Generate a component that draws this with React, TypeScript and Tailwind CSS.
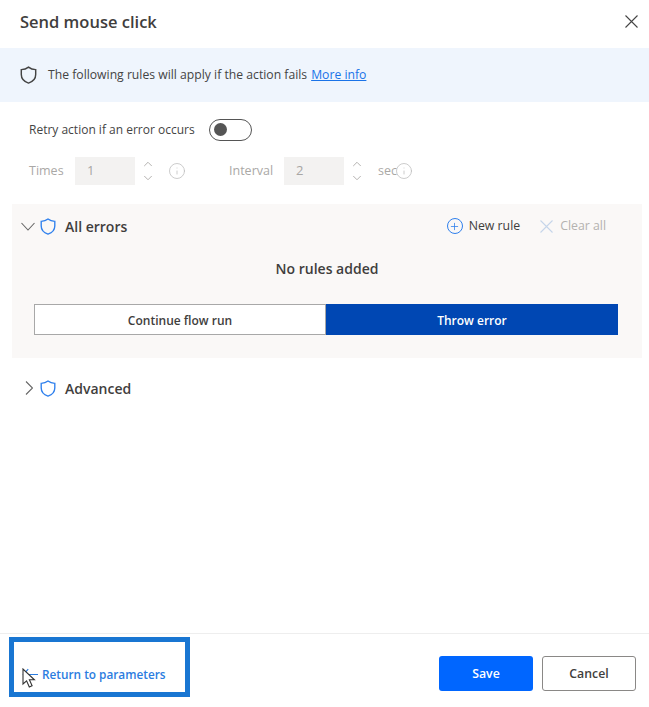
import { ChevronDown, ChevronUp, Info, Plus } from "lucide-react"

const font = { fontFamily: '"Open Sans", "Noto Sans", sans-serif' }

function Shield({ className }: { className: string }) {
  return (
    <svg viewBox="0 0 18 20" fill="none" stroke="currentColor" strokeWidth="1.6" className={className}>
      <path d="M9 1.2C11.2 3 13.800 3.900 17 4v5.400c0 4.600-2.700 7.800-8 9.600-5.300-1.800-8-5-8-9.600V4c3.200-.1 5.800-1 8-2.800z" />
    </svg>
  )
}

function Cross({ className }: { className: string }) {
  return (
    <svg viewBox="0 0 13 13" fill="none" stroke="currentColor" strokeWidth="1.1" className={className}>
      <path d="M.5.5l12 12M12.500.5l-12 12" />
    </svg>
  )
}

function Spinner({ value }: { value: string }) {
  return (
    <div className="flex h-7 w-20 items-center">
      <div className="flex h-7 w-[60px] items-center bg-[#f3f2f1] pl-3 text-[13px] text-[#a8a6a4]">{value}</div>
      <div className="ml-[6px] flex w-[14px] flex-col items-center text-[#b4b2b0]">
        <ChevronUp size={14} strokeWidth={1.7} />
        <ChevronDown size={14} strokeWidth={1.7} />
      </div>
    </div>
  )
}

export default function App() {
  return (
    <div style={font} className="flex h-[707px] w-[649px] flex-col overflow-hidden bg-white text-[#3f3e3d]">
      {/* Title */}
      <div className="flex h-12 shrink-0 items-center justify-between pr-[11px] pl-5 pb-[3px]">
        <h1 className="text-[16.500px] font-semibold">Send mouse click</h1>
        <Cross className="mb-[2px] h-[13px] w-[13px] text-[#444]" />
      </div>

      {/* Banner */}
      <div className="flex h-[54px] shrink-0 items-center bg-[#eff5fd] pl-5 text-[12.200px] text-[#444]">
        <Shield className="h-[18px] w-[17px] text-[#444]" />
        <span className="ml-[11px]">The following rules will apply if the action fails</span>
        <span className="ml-1 text-[#1a73e8] underline">More info</span>
      </div>

      {/* Retry */}
      <div className="mt-4 flex h-[23px] items-center pl-[29px] text-[12px] text-[#444]">
        <span className="w-[180px]">Retry action if an error occurs</span>
        <div className="flex h-[22px] w-[43px] items-center rounded-full border border-[#555] pl-1">
          <div className="h-[13px] w-[13px] rounded-full bg-[#555]" />
        </div>
      </div>

      <div className="mt-[16px] flex h-7 items-center pl-[29px] text-[12.500px] text-[#aaa8a6]">
        <span className="w-[46px]">Times</span>
        <Spinner value="1" />
        <Info size={18} strokeWidth={1} className="ml-[13px] text-[#bbb]" />
        <span className="ml-[43px] w-[55px]">Interval</span>
        <Spinner value="2" />
        <span className="ml-[14px] w-[17px] whitespace-nowrap">sec</span>
        <Info size={18} strokeWidth={1} className="text-[#bbb]" />
      </div>

      {/* All errors */}
      <div className="mt-[19px] ml-3 h-[154px] w-[630px] bg-[#faf8f7] pt-[13px]">
        <div className="flex h-[18px] items-center pr-[36px] pl-[9px]">
          <svg viewBox="0 0 14 9" fill="none" stroke="currentColor" strokeWidth="1.1" className="h-[9px] w-[14px] text-[#666]">
            <path d="M.5 1 7 8l6.500-7" />
          </svg>
          <Shield className="ml-[5px] h-[17px] w-[16px] text-[#2f80ed]" />
          <span className="ml-[9px] text-[14px] font-semibold">All errors</span>
          <div className="ml-auto flex h-[16px] w-[16px] items-center justify-center rounded-full border-[1.500px] border-[#2f80ed] text-[#2f80ed]">
            <Plus size={11} strokeWidth={1.7} />
          </div>
          <span className="ml-[6px] text-[12.300px]">New rule</span>
          <Cross className="ml-[20px] h-[13px] w-[13px] text-[#c5d5ea]" />
          <span className="ml-[7px] text-[12.300px] text-[#b4b2b0]">Clear all</span>
        </div>
        <div className="mt-[24px] text-center text-[14px] leading-[20px] font-semibold">No rules added</div>
        <div className="mt-[25px] ml-[22px] flex h-[31px] w-[584px] text-[12px] font-semibold">
          <div className="flex w-[292px] items-center justify-center border border-[#a8a8a8] bg-white pt-[2px]">Continue flow run</div>
          <div className="flex w-[292px] items-center justify-center bg-[#0047b3] pt-[2px] text-white">Throw error</div>
        </div>
      </div>

      {/* Advanced */}
      <div className="mt-[21px] flex h-[18px] items-center pl-[25px]">
        <svg viewBox="0 0 8 14" fill="none" stroke="currentColor" strokeWidth="1.1" className="h-[14px] w-[8px] text-[#666]">
          <path d="M1 .5 7.500 7 1 13.500" />
        </svg>
        <Shield className="ml-[7px] h-[17px] w-[16px] text-[#2f80ed]" />
        <span className="ml-[9px] text-[14px] font-semibold">Advanced</span>
      </div>

      {/* Footer */}
      <div className="mt-auto flex h-[74px] shrink-0 items-start border-t border-[#eeeeee] pr-[13px] pl-[9px]">
        <div className="relative mt-[3px] flex h-[60px] w-[181px] items-end border-[5px] border-[#1976d2] pb-[8px] pl-[8px] text-[#2b7ce0]">
          <svg viewBox="0 0 18 14" fill="none" stroke="currentColor" strokeWidth="1.300" className="mb-[3px] h-[13px] w-[16px]">
            <path d="M7 1 1.500 7 7 13M1.500 7H18" />
          </svg>
          <span className="ml-[4px] text-[11.800px] font-semibold whitespace-nowrap">Return to parameters</span>
          <svg viewBox="0 0 14 21" className="absolute top-[26px] left-[8px] h-[21px] w-[14px]" fill="#fff" stroke="#333" strokeWidth="1.100">
            <path d="M1 1v15l3.600-3.200 2.700 6.200 2.800-1.200-2.700-6h5z" />
          </svg>
        </div>
        <button className="mt-[22px] ml-auto h-[35px] w-[94px] rounded-[3px] bg-[#0066ff] pt-[2px] text-[12.300px] font-semibold text-white">Save</button>
        <button className="mt-[22px] ml-[9px] h-[35px] w-[94px] rounded-[3px] border border-[#8a8886] bg-white pt-[2px] text-[12.300px] font-semibold">Cancel</button>
      </div>
    </div>
  )
}
